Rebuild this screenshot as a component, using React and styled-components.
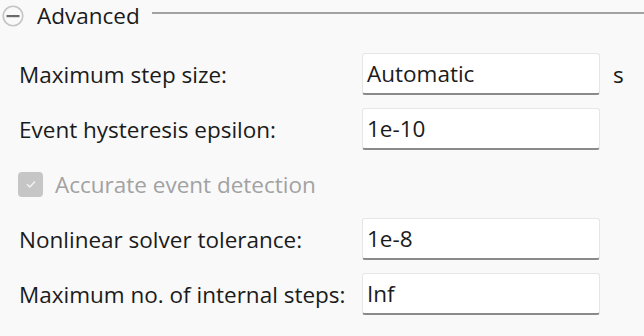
import React from 'react';
import styled, { createGlobalStyle } from 'styled-components';

const GlobalStyle = createGlobalStyle`
    html, body {
        margin: 0;
        padding: 0;
        background: #f9f9f9;
    }
    body {
        font-family: 'Open Sans', 'Noto Sans', sans-serif;
        color: #1b1b1b;
    }
`;

const Panel = styled.div`
    width: 644px;
    height: 336px;
    overflow: hidden;
    background: #f9f9f9;
`;

const Header = styled.div`
    display: flex;
    align-items: center;
    height: 32px;
    padding-left: 2px;
`;

const Toggle = styled.svg`
    width: 22px;
    height: 22px;
    flex: none;
`;

const Title = styled.span`
    font-size: 22.5px;
    margin-left: 13px;
    margin-right: 12px;
    line-height: 1;
`;

const Rule = styled.div`
    flex: 1;
    height: 2px;
    background: #a3a3a3;
    margin-top: -7px;
`;

const Form = styled.div`
    display: grid;
    grid-template-columns: 330px 238px auto;
    grid-auto-rows: 42px;
    row-gap: 13px;
    column-gap: 13px;
    align-items: center;
    padding-left: 19px;
    margin-top: 21px;
`;

const Label = styled.label`
    font-size: 22.5px;
    white-space: nowrap;
`;

const Field = styled.div`
    box-sizing: border-box;
    height: 42px;
    background: #fff;
    border: 1px solid #e6e6e6;
    border-bottom: 2px solid #8a8a8a;
    border-radius: 3px;
    display: flex;
    align-items: center;
    padding-left: 4px;
    font-size: 22.5px;
`;

const Unit = styled.span`
    font-size: 22.5px;
`;

const CheckRow = styled.div`
    grid-column: 1 / -1;
    display: flex;
    align-items: center;
    gap: 12px;
    margin-left: -1px;
    color: ${p => (p.disabled ? '#a2a2a2' : '#1b1b1b')};
    font-size: 22.5px;
`;

const Box = styled.span`
    width: 25px;
    height: 25px;
    border-radius: 4px;
    background: #c6c6c6;
    display: flex;
    align-items: center;
    justify-content: center;
    flex: none;
`;

const rows = [
    { label: 'Maximum step size:', value: 'Automatic', unit: 's' },
    { label: 'Event hysteresis epsilon:', value: '1e-10' },
    { check: 'Accurate event detection' },
    { label: 'Nonlinear solver tolerance:', value: '1e-8' },
    { label: 'Maximum no. of internal steps:', value: 'Inf' },
];

export default function App() {
    return (
        <Panel>
            <GlobalStyle />
            <Header>
                <Toggle viewBox="0 0 22 22">
                    <circle cx="11" cy="11" r="9.8" fill="#f9f9f9" stroke="#c4c4c4" strokeWidth="1.6" />
                    <rect x="4.5" y="10" width="13" height="2.2" fill="#6a6a6a" />
                </Toggle>
                <Title>Advanced</Title>
                <Rule />
            </Header>
            <Form>
                {rows.map((row, i) =>
                    row.check ? (
                        <CheckRow key={i} disabled>
                            <Box>
                                <svg width="14" height="14" viewBox="0 0 14 14">
                                    <path d="M3 7.2 L5.8 10 L11 4.4" fill="none" stroke="#f4f4f4" strokeWidth="1.4" />
                                </svg>
                            </Box>
                            {row.check}
                        </CheckRow>
                    ) : (
                        <React.Fragment key={i}>
                            <Label>{row.label}</Label>
                            <Field>{row.value}</Field>
                            <Unit>{row.unit || ''}</Unit>
                        </React.Fragment>
                    )
                )}
            </Form>
        </Panel>
    );
}
